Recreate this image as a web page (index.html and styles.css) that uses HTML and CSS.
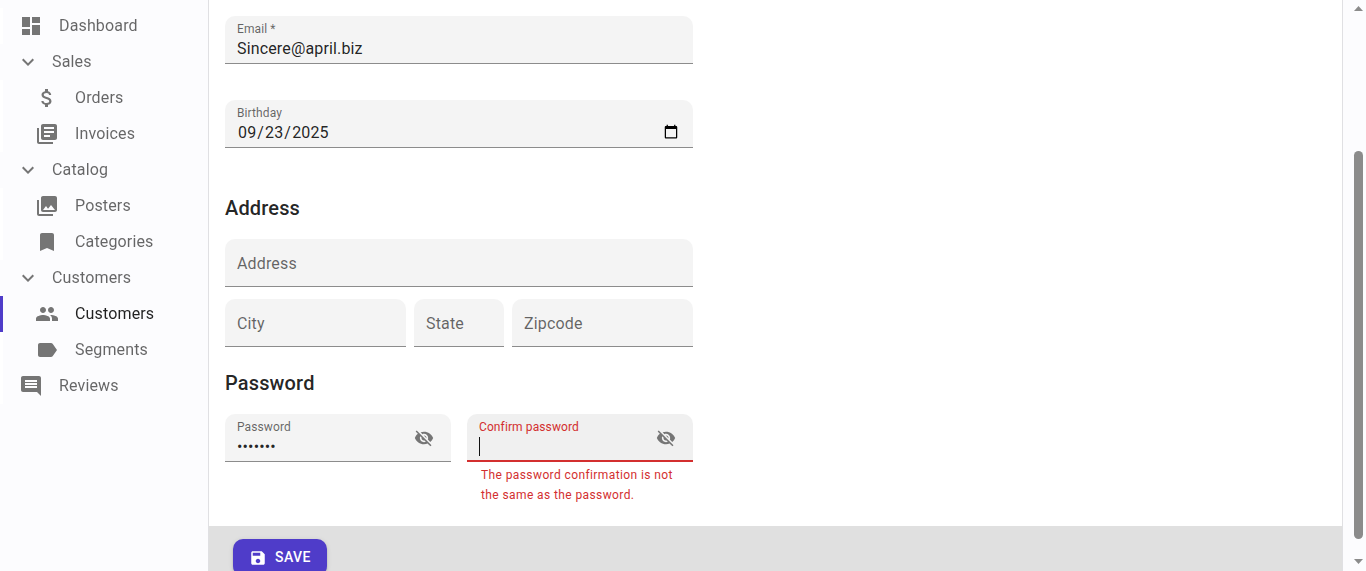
FILE: index.html
```html
<!DOCTYPE html>
<html lang="en">
<head>
<meta charset="utf-8">
<title>Customer</title>
<link rel="stylesheet" href="styles.css">
</head>
<body>
<div class="app">
  <nav class="sidebar">
    <a class="item"><svg class="icon" viewBox="0 0 24 24"><path d="M3 13h8V3H3v10zm0 8h8v-6H3v6zm10 0h8V11h-8v10zm0-18v6h8V3h-8z"/></svg><span>Dashboard</span></a>
    <div class="group"><svg class="icon" viewBox="0 0 24 24"><path d="M16.59 8.59 12 13.17 7.41 8.59 6 10l6 6 6-6z"/></svg><span>Sales</span></div>
    <a class="item sub"><svg class="icon" viewBox="0 0 24 24"><path d="M11.8 10.9c-2.27-.59-3-1.2-3-2.15 0-1.09 1.01-1.85 2.7-1.85 1.78 0 2.44.85 2.5 2.1h2.21c-.07-1.72-1.12-3.3-3.21-3.81V3h-3v2.16c-1.94.42-3.5 1.68-3.5 3.61 0 2.31 1.91 3.46 4.7 4.13 2.5.6 3 1.48 3 2.41 0 .69-.49 1.79-2.7 1.79-2.06 0-2.87-.92-2.98-2.1h-2.2c.12 2.19 1.76 3.42 3.68 3.83V21h3v-2.15c1.95-.37 3.5-1.5 3.5-3.55 0-2.84-2.43-3.81-4.7-4.4z"/></svg><span>Orders</span></a>
    <a class="item sub"><svg class="icon" viewBox="0 0 24 24"><path d="M4 6H2v14c0 1.1.9 2 2 2h14v-2H4V6zm16-4H8c-1.1 0-2 .9-2 2v12c0 1.1.9 2 2 2h12c1.1 0 2-.9 2-2V4c0-1.1-.9-2-2-2zm-1 9H9V9h10v2zm-4 4H9v-2h6v2zm4-8H9V5h10v2z"/></svg><span>Invoices</span></a>
    <div class="group"><svg class="icon" viewBox="0 0 24 24"><path d="M16.59 8.59 12 13.17 7.41 8.59 6 10l6 6 6-6z"/></svg><span>Catalog</span></div>
    <a class="item sub"><svg class="icon" viewBox="0 0 24 24"><path d="M22 16V4c0-1.1-.9-2-2-2H8c-1.1 0-2 .9-2 2v12c0 1.1.9 2 2 2h12c1.1 0 2-.9 2-2zm-11-4 2.03 2.71L16 11l4 5H8l3-4zM2 6v14c0 1.1.9 2 2 2h14v-2H4V6H2z"/></svg><span>Posters</span></a>
    <a class="item sub"><svg class="icon" viewBox="0 0 24 24"><path d="M17 3H7c-1.1 0-1.99.9-1.99 2L5 21l7-3 7 3V5c0-1.1-.9-2-2-2z"/></svg><span>Categories</span></a>
    <div class="group"><svg class="icon" viewBox="0 0 24 24"><path d="M16.59 8.59 12 13.17 7.41 8.59 6 10l6 6 6-6z"/></svg><span>Customers</span></div>
    <a class="item sub active"><svg class="icon" viewBox="0 0 24 24"><path d="M16 11c1.66 0 2.99-1.34 2.99-3S17.66 5 16 5c-1.66 0-3 1.34-3 3s1.34 3 3 3zm-8 0c1.66 0 2.99-1.34 2.99-3S9.66 5 8 5C6.34 5 5 6.34 5 8s1.34 3 3 3zm0 2c-2.33 0-7 1.17-7 3.5V19h14v-2.5c0-2.33-4.67-3.5-7-3.5zm8 0c-.29 0-.62.02-.97.05 1.16.84 1.97 1.97 1.97 3.45V19h6v-2.5c0-2.33-4.67-3.5-7-3.5z"/></svg><span>Customers</span></a>
    <a class="item sub"><svg class="icon" viewBox="0 0 24 24"><path d="M17.63 5.84C17.27 5.33 16.67 5 16 5L5 5.01C3.9 5.01 3 5.9 3 7v10c0 1.1.9 1.99 2 1.99L16 19c.67 0 1.27-.33 1.63-.84L22 12l-4.37-6.16z"/></svg><span>Segments</span></a>
    <a class="item"><svg class="icon" viewBox="0 0 24 24"><path d="M21.99 4c0-1.1-.89-2-1.99-2H4c-1.1 0-2 .9-2 2v12c0 1.1.9 2 2 2h14l4 4-.01-18zM18 14H6v-2h12v2zm0-3H6V9h12v2zm0-3H6V6h12v2z"/></svg><span>Reviews</span></a>
  </nav>
  <main class="card">
    <form class="form">
      <label class="field filled"><span class="label">Email *</span><input class="input" type="text" value="Sincere@april.biz"></label>
      <label class="field filled birthday"><span class="label">Birthday</span><input class="input date" type="date" value="2025-09-23"></label>
      <h6 class="heading">Address</h6>
      <label class="field empty"><span>Address</span></label>
      <div class="row address-row">
        <label class="field empty"><span>City</span></label>
        <label class="field empty"><span>State</span></label>
        <label class="field empty"><span>Zipcode</span></label>
      </div>
      <h6 class="heading password-heading">Password</h6>
      <div class="row password-row">
        <label class="field secret"><span class="text"><span class="label">Password</span><input class="input" type="password" value="secret1"></span><svg class="eye" viewBox="0 0 24 24"><path d="M12 7c2.76 0 5 2.24 5 5 0 .65-.13 1.26-.36 1.83l2.92 2.92c1.51-1.26 2.7-2.89 3.43-4.75-1.73-4.39-6-7.5-11-7.5-1.4 0-2.74.25-3.98.7l2.16 2.16C10.74 7.13 11.35 7 12 7zM2 4.27l2.28 2.28.46.46C3.08 8.3 1.78 10.02 1 12c1.73 4.39 6 7.5 11 7.5 1.55 0 3.03-.3 4.38-.84l.42.42L19.73 22 21 20.73 3.27 3 2 4.27zM7.53 9.8l1.55 1.55c-.05.21-.08.43-.08.65 0 1.66 1.34 3 3 3 .22 0 .44-.03.65-.08l1.55 1.55c-.67.33-1.41.53-2.2.53-2.76 0-5-2.24-5-5 0-.79.2-1.53.53-2.2zm4.31-.78 3.15 3.15.02-.16c0-1.66-1.34-3-3-3l-.17.01z"/></svg></label>
        <div>
          <label class="field secret error"><span class="text"><span class="label">Confirm password</span><span class="caret"></span></span><svg class="eye" viewBox="0 0 24 24"><path d="M12 7c2.76 0 5 2.24 5 5 0 .65-.13 1.26-.36 1.83l2.92 2.92c1.51-1.26 2.7-2.89 3.43-4.75-1.73-4.39-6-7.5-11-7.5-1.4 0-2.74.25-3.98.7l2.16 2.16C10.74 7.13 11.35 7 12 7zM2 4.27l2.28 2.28.46.46C3.08 8.3 1.78 10.02 1 12c1.73 4.39 6 7.5 11 7.5 1.55 0 3.03-.3 4.38-.84l.42.42L19.73 22 21 20.73 3.27 3 2 4.27zM7.53 9.8l1.55 1.55c-.05.21-.08.43-.08.65 0 1.66 1.34 3 3 3 .22 0 .44-.03.65-.08l1.55 1.55c-.67.33-1.41.53-2.2.53-2.76 0-5-2.24-5-5 0-.79.2-1.53.53-2.2zm4.31-.78 3.15 3.15.02-.16c0-1.66-1.34-3-3-3l-.17.01z"/></svg></label>
          <p class="helper">The password confirmation is not the same as the password.</p>
        </div>
      </div>
    </form>
    <footer class="toolbar">
      <button class="save" type="button"><svg viewBox="0 0 24 24"><path d="M17 3H5c-1.11 0-2 .9-2 2v14c0 1.1.89 2 2 2h14c1.1 0 2-.9 2-2V7l-4-4zm-5 16c-1.66 0-3-1.34-3-3s1.34-3 3-3 3 1.34 3 3-1.34 3-3 3zm3-10H5V5h10v4z"/></svg><span>Save</span></button>
    </footer>
  </main>
  <div class="scrollbar">
    <svg class="arrow" viewBox="0 0 9 5"><path d="M4.5 0 9 5H0z"/></svg>
    <div class="thumb"></div>
    <svg class="arrow" viewBox="0 0 9 5"><path d="M0 0h9L4.5 5z"/></svg>
  </div>
</div>
</body>
</html>
```
FILE: styles.css
```css
* { box-sizing: border-box; }
body {
  margin: 0;
  overflow: hidden;
  background: #fcfcfe;
  color: rgba(0, 0, 0, 0.87);
  font: 400 16px/24px Roboto, sans-serif;
}
svg { display: block; flex: none; fill: currentColor; }
.app {
  display: grid;
  grid-template-columns: 208px 1135px 1fr;
  height: 571px;
}

/* Navigation */
.sidebar {
  padding-top: 8px;
  color: rgba(0, 0, 0, 0.6);
  letter-spacing: 0.15px;
  will-change: transform;
}
.item, .group { display: flex; align-items: center; height: 36px; padding-bottom: 1px; }
.item { border-left: 3px solid #fff; padding-left: 16px; gap: 16px; }
.item.sub { padding-left: 32px; }
.group { padding-left: 16px; gap: 12px; }
.item.active { border-color: #4f3cc9; color: rgba(0, 0, 0, 0.87); }
.icon { width: 24px; height: 24px; color: #757575; }

/* Card and form */
.card {
  display: flex;
  flex-direction: column;
  height: 571px;
  overflow: hidden;
  background: #fff;
  border: solid #e0e0e3;
  border-width: 0 1px;
}
.form { width: 500px; height: 526px; flex: none; padding: 16px; }
.field {
  display: block;
  height: 48px;
  padding: 0 12px;
  background: #f4f4f4;
  border-bottom: 1px solid #8c8c8c;
  border-radius: 10px 10px 0 0;
}
.label {
  display: block;
  padding-top: 5px;
  color: rgba(0, 0, 0, 0.6);
  font-size: 12px;
  line-height: 16px;
  letter-spacing: 0.11px;
}
.input {
  display: block;
  width: 100%;
  height: 23px;
  margin: 0;
  padding: 0;
  border: 0;
  outline: 0;
  background: none;
  color: rgba(0, 0, 0, 0.87);
  font: 400 16px/23px Roboto, sans-serif;
  letter-spacing: 0.15px;
}
.date::-webkit-calendar-picker-indicator { margin-bottom: 2px; }
.birthday { margin-top: 36px; }
.heading {
  margin: 44px 0 15px;
  font-size: 20px;
  line-height: 32px;
  font-weight: 500;
  letter-spacing: 0.15px;
}
.empty {
  display: flex;
  align-items: center;
  padding-top: 2px;
  color: rgba(0, 0, 0, 0.6);
  letter-spacing: 0.15px;
}
.row { display: grid; }
.address-row { grid-template-columns: 181px 90px 181px; gap: 8px; margin-top: 12px; }
.password-heading { margin-top: 20px; }
.password-row { grid-template-columns: 226px 226px; gap: 16px; }
.secret { display: flex; justify-content: space-between; padding-right: 17px; }
.text { flex: 1; min-width: 0; }
.eye { width: 20px; height: 20px; margin-top: 14px; color: #757575; }
.error { background: #f0f0f0; border-bottom: 2px solid #d32f2f; }
.error .label { color: #d32f2f; }
.caret { display: block; width: 1px; height: 19px; margin-top: 2px; background: #111; }
.helper {
  width: 212px;
  margin: 3px 0 0 14px;
  color: #d32f2f;
  font-size: 12px;
  line-height: 20px;
  letter-spacing: 0.4px;
}

/* Actions */
.toolbar { flex: 1; padding: 13px 24px 0; background: #e0e0e0; }
.save {
  display: flex;
  align-items: center;
  gap: 8px;
  width: 94px;
  height: 37px;
  padding: 0 16px;
  border: 0;
  border-radius: 10px;
  background: #4f3cc9;
  color: #fff;
  font: 500 14px/24px Roboto, sans-serif;
  letter-spacing: 0.4px;
  text-transform: uppercase;
  box-shadow: 0 3px 1px -2px rgba(0,0,0,.2), 0 2px 2px rgba(0,0,0,.14), 0 1px 5px rgba(0,0,0,.12);
}
.save svg { width: 18px; height: 18px; }
.save span { padding-bottom: 2px; }

/* Page scrollbar */
.scrollbar {
  display: flex;
  flex-direction: column;
  align-items: center;
  justify-content: space-between;
  padding: 6px 3px 7px 11px;
  color: #8b8b8b;
}
.arrow { width: 9px; height: 5px; }
.thumb { width: 9px; height: 388px; margin-top: 120px; border-radius: 5px; background: #8b8b8b; }
```
